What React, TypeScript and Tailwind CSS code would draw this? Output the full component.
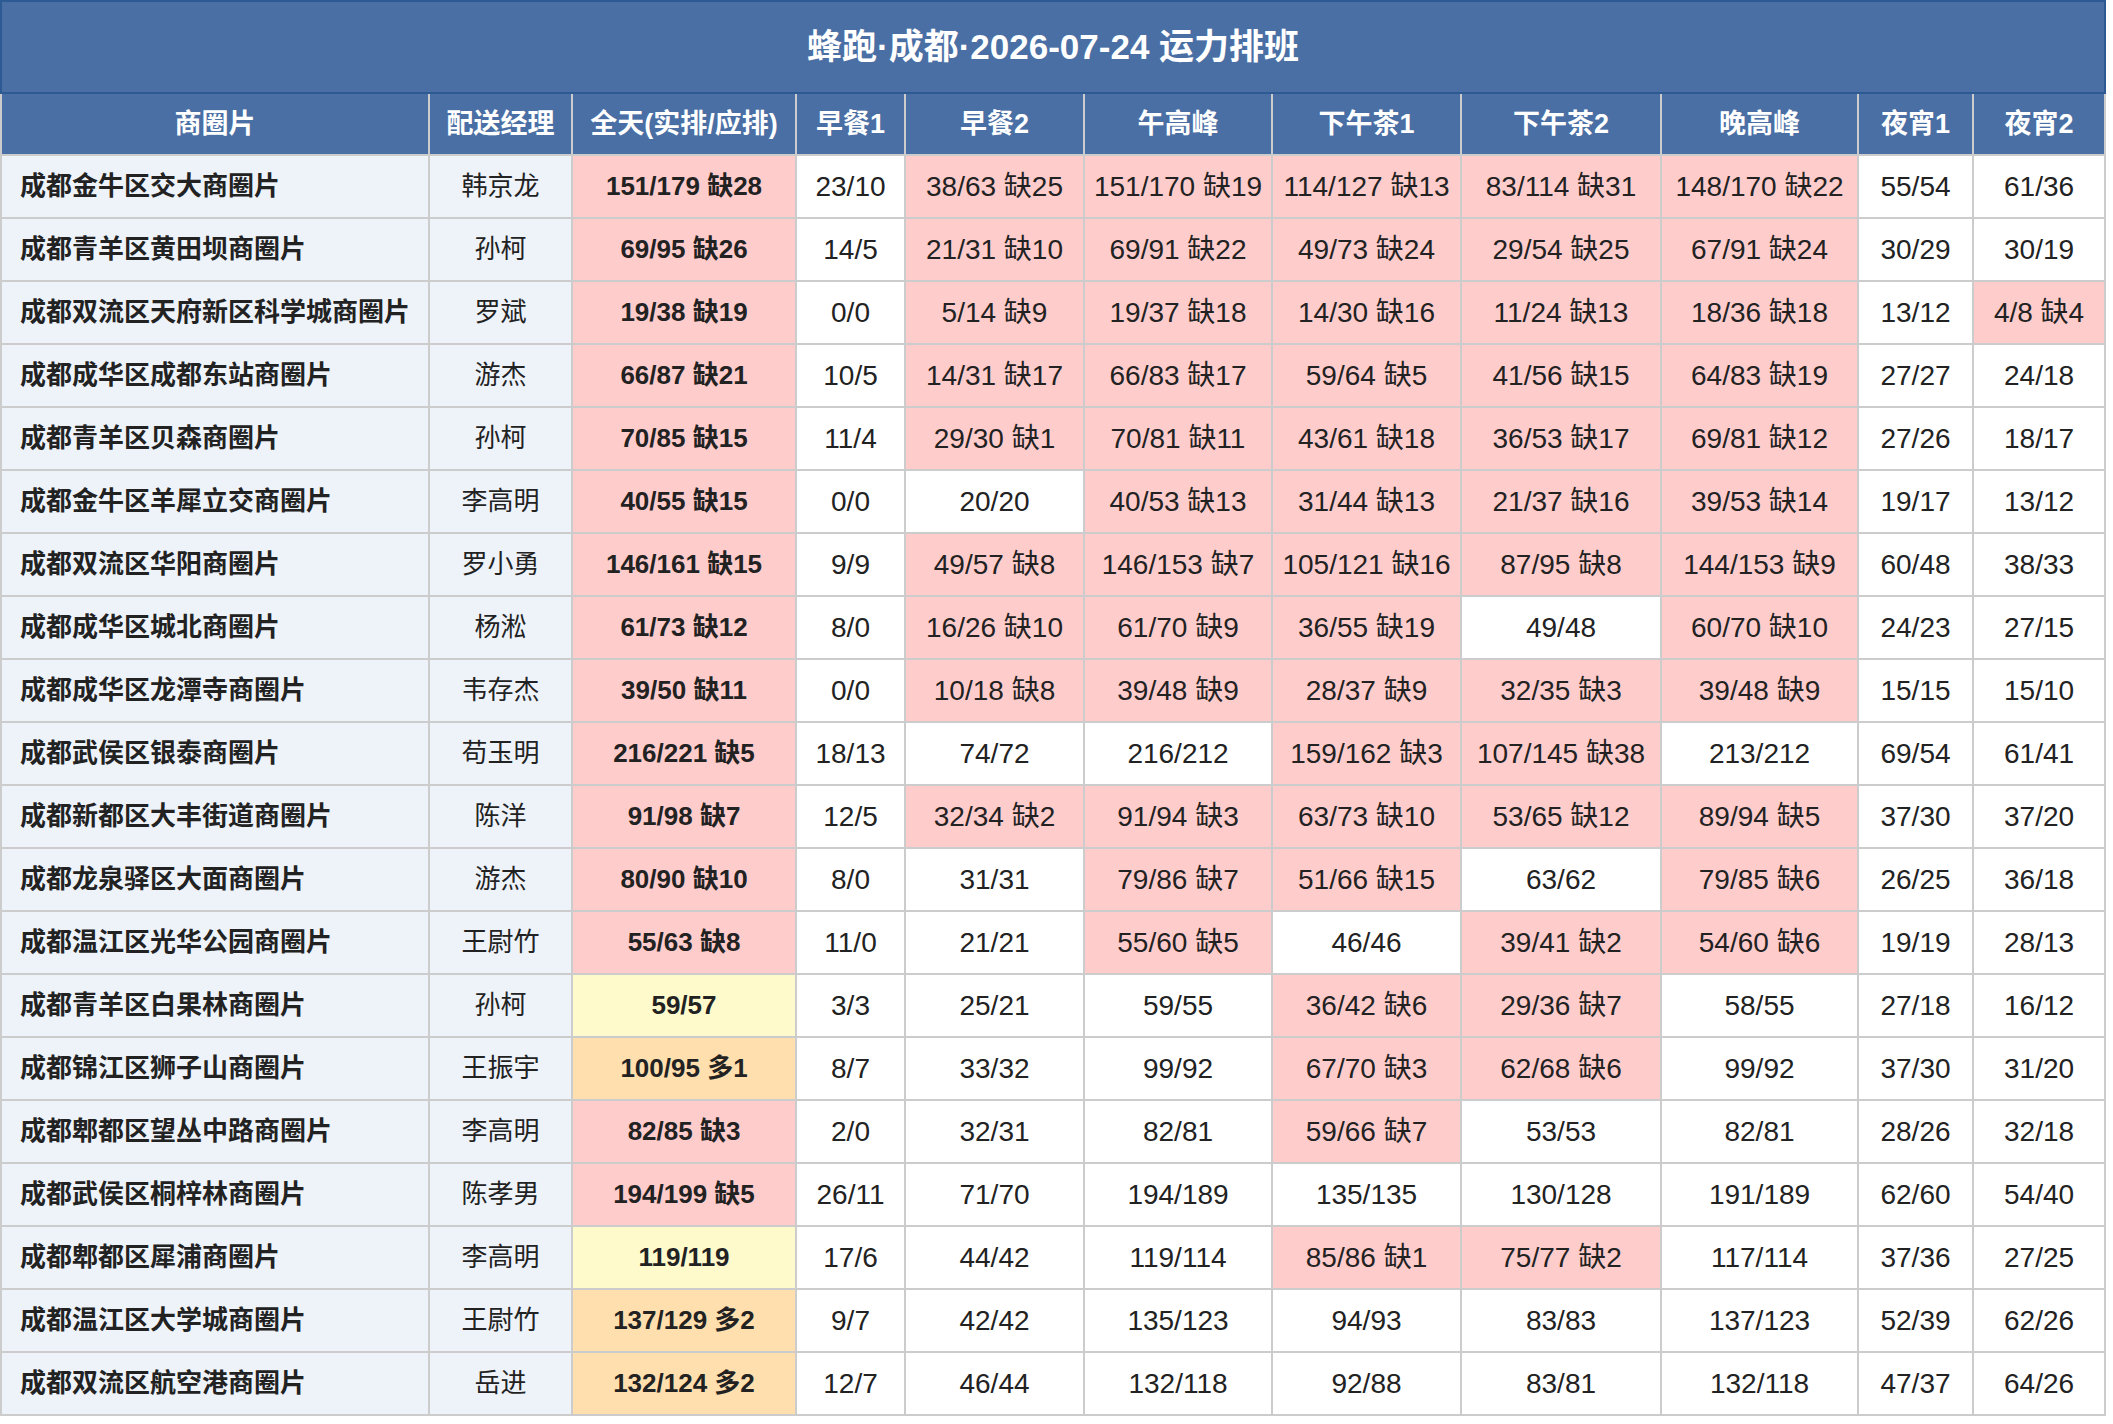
import React from "react";

const cols = [428, 143, 224, 109, 179, 188, 189, 200, 197, 115, 132];
const heads = ["商圈片", "配送经理", "全天(实排/应排)", "早餐1", "早餐2", "午高峰", "下午茶1", "下午茶2", "晚高峰", "夜宵1", "夜宵2"];

// 全天 colour: 缺 -> red, 多 -> orange, otherwise yellow
const rows: string[][] = [
    ["成都金牛区交大商圈片", "韩京龙", "151/179 缺28", "23/10", "38/63 缺25", "151/170 缺19", "114/127 缺13", "83/114 缺31", "148/170 缺22", "55/54", "61/36"],
    ["成都青羊区黄田坝商圈片", "孙柯", "69/95 缺26", "14/5", "21/31 缺10", "69/91 缺22", "49/73 缺24", "29/54 缺25", "67/91 缺24", "30/29", "30/19"],
    ["成都双流区天府新区科学城商圈片", "罗斌", "19/38 缺19", "0/0", "5/14 缺9", "19/37 缺18", "14/30 缺16", "11/24 缺13", "18/36 缺18", "13/12", "4/8 缺4"],
    ["成都成华区成都东站商圈片", "游杰", "66/87 缺21", "10/5", "14/31 缺17", "66/83 缺17", "59/64 缺5", "41/56 缺15", "64/83 缺19", "27/27", "24/18"],
    ["成都青羊区贝森商圈片", "孙柯", "70/85 缺15", "11/4", "29/30 缺1", "70/81 缺11", "43/61 缺18", "36/53 缺17", "69/81 缺12", "27/26", "18/17"],
    ["成都金牛区羊犀立交商圈片", "李高明", "40/55 缺15", "0/0", "20/20", "40/53 缺13", "31/44 缺13", "21/37 缺16", "39/53 缺14", "19/17", "13/12"],
    ["成都双流区华阳商圈片", "罗小勇", "146/161 缺15", "9/9", "49/57 缺8", "146/153 缺7", "105/121 缺16", "87/95 缺8", "144/153 缺9", "60/48", "38/33"],
    ["成都成华区城北商圈片", "杨淞", "61/73 缺12", "8/0", "16/26 缺10", "61/70 缺9", "36/55 缺19", "49/48", "60/70 缺10", "24/23", "27/15"],
    ["成都成华区龙潭寺商圈片", "韦存杰", "39/50 缺11", "0/0", "10/18 缺8", "39/48 缺9", "28/37 缺9", "32/35 缺3", "39/48 缺9", "15/15", "15/10"],
    ["成都武侯区银泰商圈片", "苟玉明", "216/221 缺5", "18/13", "74/72", "216/212", "159/162 缺3", "107/145 缺38", "213/212", "69/54", "61/41"],
    ["成都新都区大丰街道商圈片", "陈洋", "91/98 缺7", "12/5", "32/34 缺2", "91/94 缺3", "63/73 缺10", "53/65 缺12", "89/94 缺5", "37/30", "37/20"],
    ["成都龙泉驿区大面商圈片", "游杰", "80/90 缺10", "8/0", "31/31", "79/86 缺7", "51/66 缺15", "63/62", "79/85 缺6", "26/25", "36/18"],
    ["成都温江区光华公园商圈片", "王尉竹", "55/63 缺8", "11/0", "21/21", "55/60 缺5", "46/46", "39/41 缺2", "54/60 缺6", "19/19", "28/13"],
    ["成都青羊区白果林商圈片", "孙柯", "59/57", "3/3", "25/21", "59/55", "36/42 缺6", "29/36 缺7", "58/55", "27/18", "16/12"],
    ["成都锦江区狮子山商圈片", "王振宇", "100/95 多1", "8/7", "33/32", "99/92", "67/70 缺3", "62/68 缺6", "99/92", "37/30", "31/20"],
    ["成都郫都区望丛中路商圈片", "李高明", "82/85 缺3", "2/0", "32/31", "82/81", "59/66 缺7", "53/53", "82/81", "28/26", "32/18"],
    ["成都武侯区桐梓林商圈片", "陈孝男", "194/199 缺5", "26/11", "71/70", "194/189", "135/135", "130/128", "191/189", "62/60", "54/40"],
    ["成都郫都区犀浦商圈片", "李高明", "119/119", "17/6", "44/42", "119/114", "85/86 缺1", "75/77 缺2", "117/114", "37/36", "27/25"],
    ["成都温江区大学城商圈片", "王尉竹", "137/129 多2", "9/7", "42/42", "135/123", "94/93", "83/83", "137/123", "52/39", "62/26"],
    ["成都双流区航空港商圈片", "岳进", "132/124 多2", "12/7", "46/44", "132/118", "92/88", "83/81", "132/118", "47/37", "64/26"],
];

const bgOf = (v: string, total: boolean) => {
    if (v.includes("缺")) return "bg-[#ffcccc]";
    if (!total) return "bg-white";
    if (v.includes("多")) return "bg-[#ffdfae]";
    return "bg-[#fffacc]";
};

const App = () => {
    return (
        <div
            className="w-[2113px] min-h-[1424px] bg-white text-[#222]"
            style={{ fontFamily: '"Liberation Sans", "Noto Sans CJK SC", sans-serif' }}
        >
            <table className="border-collapse table-fixed w-[2106px]">
                <colgroup>
                    {cols.map((w, i) => (
                        <col key={i} style={{ width: w }} />
                    ))}
                </colgroup>
                <thead>
                    <tr className="h-[92px]">
                        <th
                            colSpan={11}
                            className="bg-[#4a6fa5] border-2 border-[#2e5a94] text-white text-[35px] font-bold text-center"
                        >
                            蜂跑·成都·2026-07-24 运力排班
                        </th>
                    </tr>
                    <tr className="h-[62px]">
                        {heads.map((h) => (
                            <th
                                key={h}
                                className="bg-[#4a6fa5] border-2 border-[#cccccc] text-white text-[27px] font-bold text-center whitespace-nowrap"
                            >
                                {h}
                            </th>
                        ))}
                    </tr>
                </thead>
                <tbody>
                    {rows.map((r) => (
                        <tr key={r[0]} className="h-[63px]">
                            <td className="bg-[#eef3fa] border-2 border-[#cccccc] text-[26px] font-bold pl-[18px] whitespace-nowrap">
                                {r[0]}
                            </td>
                            <td className="bg-[#eef3fa] border-2 border-[#cccccc] text-[26px] text-center whitespace-nowrap">
                                {r[1]}
                            </td>
                            {r.slice(2).map((v, i) => (
                                <td
                                    key={i}
                                    className={`border-2 border-[#cccccc] text-center whitespace-nowrap ${bgOf(v, i === 0)} ${
                                        i === 0 ? "font-bold text-[26px]" : "text-[28px]"
                                    }`}
                                >
                                    {v}
                                </td>
                            ))}
                        </tr>
                    ))}
                </tbody>
            </table>
        </div>
    );
};

export default App;
